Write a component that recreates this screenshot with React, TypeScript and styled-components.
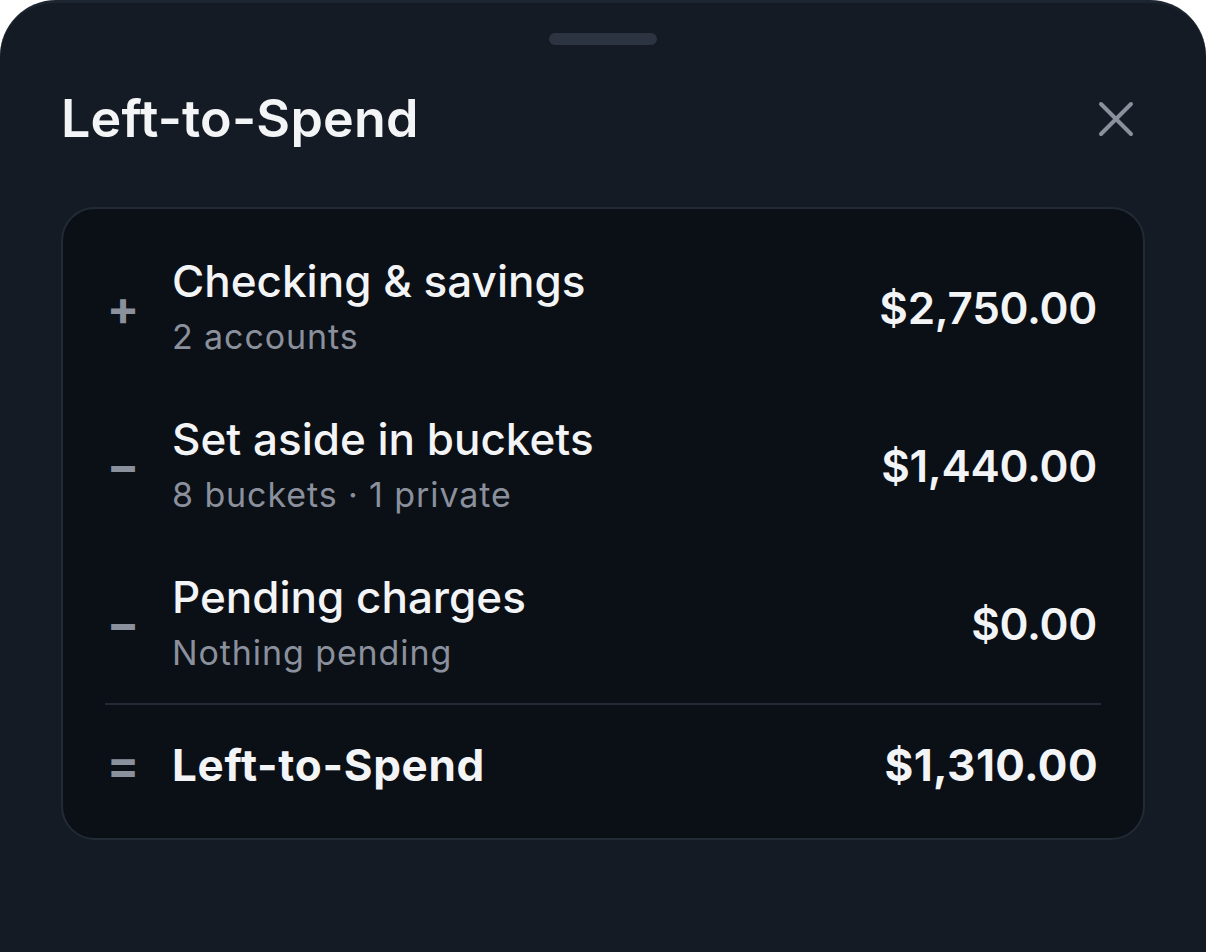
import React from "react";
import styled, { createGlobalStyle } from "styled-components";

const Global = createGlobalStyle`
  html, body { margin: 0; padding: 0; background: #ffffff; }
  body { font-family: Inter, "Noto Sans", "Liberation Sans", sans-serif; -webkit-font-smoothing: antialiased; }
  * { box-sizing: border-box; }
`;

const Sheet = styled.div`
  width: 1206px;
  min-height: 952px;
  background: #151b24;
  border-top: 3px solid #1d2530;
  border-radius: 56px 56px 0 0;
  padding: 30px 61px 0;
  display: flex;
  flex-direction: column;
`;

const Handle = styled.div`
  align-self: center;
  width: 108px;
  height: 12px;
  border-radius: 6px;
  background: #2c3441;
`;

const Header = styled.div`
  margin-top: 42px;
  display: flex;
  align-items: center;
  justify-content: space-between;
`;

const Title = styled.h1`
  margin: 0;
  font-size: 52px;
  line-height: 64px;
  font-weight: 600;
  color: #f3f4f6;
  letter-spacing: 0.2px;
`;

const CloseButton = styled.button`
  width: 48px;
  height: 48px;
  margin-right: 5px;
  padding: 0;
  border: none;
  background: transparent;
  display: flex;
  align-items: center;
  justify-content: center;
  cursor: pointer;
`;

const Card = styled.div`
  margin-top: 56px;
  background: #0b0f16;
  border: 2px solid #222a36;
  border-radius: 34px;
  padding: 20px 42px 21px;
  display: flex;
  flex-direction: column;
`;

const Row = styled.div`
  display: flex;
  align-items: center;
  padding: 24px 0;
`;

const TotalRow = styled(Row)`
  padding: 32px 0 24px;
  border-top: 2px solid #222a36;
`;

const Sign = styled.div`
  width: 36px;
  margin-right: 31px;
  text-align: center;
  font-size: 48px;
  line-height: 1;
  font-weight: 700;
  color: #8a909c;
`;

const Info = styled.div`
  flex: 1;
  display: flex;
  flex-direction: column;
`;

const Label = styled.div<{ $bold?: boolean }>`
  font-size: 44px;
  line-height: 56px;
  font-weight: ${(p) => (p.$bold ? 700 : 500)};
  letter-spacing: ${(p) => (p.$bold ? "0.7px" : "0")};
  color: #f3f4f6;
`;

const Sub = styled.div`
  margin-top: 2px;
  font-size: 34px;
  line-height: 52px;
  font-weight: 400;
  letter-spacing: 0.9px;
  color: #8a909c;
`;

const Amount = styled.div<{ $bold?: boolean }>`
  margin-right: ${(p) => (p.$bold ? "3px" : "4px")};
  font-size: 44px;
  line-height: 56px;
  font-weight: ${(p) => (p.$bold ? 700 : 600)};
  letter-spacing: ${(p) => (p.$bold ? "0.4px" : "-0.3px")};
  color: #f3f4f6;
`;

const rows = [
  { sign: "+", label: "Checking & savings", sub: "2 accounts", amount: "$2,750.00" },
  { sign: "−", label: "Set aside in buckets", sub: "8 buckets · 1 private", amount: "$1,440.00" },
  { sign: "−", label: "Pending charges", sub: "Nothing pending", amount: "$0.00" },
];

export default function App() {
  return (
    <>
      <Global />
      <Sheet>
        <Handle />
        <Header>
          <Title>Left-to-Spend</Title>
          <CloseButton aria-label="Close">
            <svg width="38" height="38" viewBox="0 0 38 38" fill="none">
              <path d="M4 4L34 34M34 4L4 34" stroke="#8a909c" strokeWidth="4" strokeLinecap="round" />
            </svg>
          </CloseButton>
        </Header>
        <Card>
          {rows.map((r) => (
            <Row key={r.label}>
              <Sign>{r.sign}</Sign>
              <Info>
                <Label>{r.label}</Label>
                <Sub>{r.sub}</Sub>
              </Info>
              <Amount>{r.amount}</Amount>
            </Row>
          ))}
          <TotalRow>
            <Sign>=</Sign>
            <Info>
              <Label $bold>Left-to-Spend</Label>
            </Info>
            <Amount $bold>$1,310.00</Amount>
          </TotalRow>
        </Card>
      </Sheet>
    </>
  );
}
